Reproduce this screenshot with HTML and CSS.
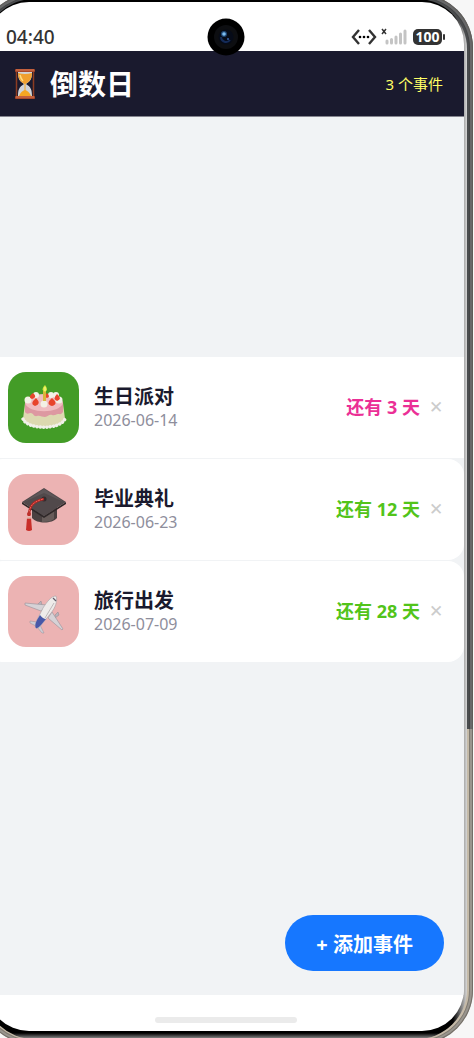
FILE: index.html
```html
<!DOCTYPE html>
<html lang="zh-CN">
<head>
    <meta charset="UTF-8">
    <meta name="viewport" content="width=device-width, initial-scale=1">
    <title>倒数日</title>
    <link rel="stylesheet" href="styles.css">
</head>
<body>
<div class="phone">
    <div class="bezel">
        <div class="screen">
            <!-- 状态栏 -->
            <div class="status">
                <span class="time">04:40</span>
                <svg class="net" viewBox="0 0 26 16" aria-hidden="true">
                    <path d="M8 1 2 8l6 7M18 1l6 7-6 7" fill="none" stroke="#333" stroke-width="2.400"/>
                    <circle cx="9" cy="8" r="1.300"/><circle cx="13" cy="8" r="1.300"/><circle cx="17" cy="8" r="1.300"/>
                </svg>
                <svg class="signal" viewBox="0 0 26 17" aria-hidden="true">
                    <path d="m1 1 4 5M5 1 1 6" stroke="#333" stroke-width="1.500"/>
                    <path d="M6 15v-2M10.500 15v-3.500M15 15v-6M19.500 15V6M24 15V3" stroke="#c4c4c4" stroke-width="3" stroke-linecap="round"/>
                </svg>
                <span class="battery">100</span>
            </div>
            <div class="camera">
                <svg viewBox="0 0 38 38" aria-hidden="true">
                    <circle cx="19" cy="19" r="18.500" fill="#000"/>
                    <circle cx="19" cy="19" r="12" fill="#0d0e11"/>
                    <circle cx="19" cy="19" r="7.500" fill="#060b18"/>
                    <path d="M14 19a5 5 0 0 0 9 3" fill="none" stroke="#142b58" stroke-width="2"/>
                    <circle cx="17" cy="16" r="3" fill="#1d4473"/>
                    <circle cx="17" cy="16" r="1.800" fill="#7dbdf0"/>
                    <circle cx="21" cy="21" r="1" fill="#3a62a8"/>
                </svg>
            </div>

            <!-- 标题 -->
            <header class="header">
                <svg class="hourglass" viewBox="0 0 22 32" aria-hidden="true">
                    <path d="M4 4c0 6 1 9 6 12-5 3-6 6-6 12h14c0-6-1-9-6-12 5-3 6-6 6-12z" fill="#cfd3d9"/>
                    <path d="M4 5c0 5 2 9 7 11 5-2 7-6 7-11q-7 2-14 0z" fill="#f0a030"/>
                    <path d="M5 28q2-5 6-6 4 1 6 6z" fill="#f5a623"/>
                    <path d="M11 15v8" stroke="#f5a623"/>
                    <path d="M6 7q1 4 3 6" fill="none" stroke="#ffdc80" stroke-width="1.500"/>
                    <path d="M2.500 3v26M19.500 3v26" stroke="#8c3c22" stroke-width="1.500"/>
                    <rect x="1" y="1" width="20" height="3" rx="1" fill="#a9492b"/>
                    <rect x="1" y="28" width="20" height="3" rx="1" fill="#a9492b"/>
                    <path d="M2 2h18M2 29h18" stroke="#dc7950"/>
                </svg>
                <h1>倒数日</h1>
                <span class="count">3 个事件</span>
            </header>

            <main class="main">
                <ul class="list">
                    <li>
                        <div class="icon green">
                            <svg viewBox="0 0 48 48" aria-hidden="true">
                                <path d="M5 20 3 36c3 6 12 8 21 8s18-2 21-8l-2-16z" fill="#dcd9b0"/>
                                <path d="M3 36c5 11 37 11 42 0" fill="none" stroke="#f1f0e9" stroke-width="3.500" stroke-linecap="round" stroke-dasharray="0.100 3.200"/>
                                <ellipse cx="24" cy="20" rx="19" ry="9" fill="#f0bcc0"/>
                                <path d="M5 20v9c2 3 4 1 6 1s3 4 6 3 5 1 8 1 4-3 7-2 4-1 6-1 3 1 5-2v-9c-3 11-35 11-38 0z" fill="#dd98a1"/>
                                <g fill="#f3f1e6"><circle cx="8" cy="17" r="3.500"/><circle cx="16" cy="12" r="3"/><circle cx="31" cy="12" r="3"/><circle cx="39" cy="17" r="3.500"/><circle cx="24" cy="21" r="3.500"/><circle cx="36" cy="12" r="3"/></g>
                                <g fill="#e8442b"><path d="M13 10q-6 4-1 6 6-2 1-6zM16 15q-7 6-1 8 7-2 1-8zM32 15q-7 6 0 8 7-2 0-8zM37 11q-5 5 0 7 6-2 0-7zM27 10q-4 4 0 5 4-1 0-5z"/></g>
                                <path d="M24.500 8v10" stroke="#d9b63c" stroke-width="3"/>
                                <path d="M25 2q-5 5 0 7 4-2 0-7z" fill="#d8e83b"/>
                                <path d="M25 4v4" stroke="#fff3a0"/>
                            </svg>
                        </div>
                        <div class="info">
                            <h2>生日派对</h2>
                            <time datetime="2026-06-14">2026-06-14</time>
                        </div>
                        <span class="days soon">还有 3 天</span>
                        <button class="del" type="button" aria-label="删除 生日派对">✕</button>
                    </li>
                    <li>
                        <div class="icon">
                            <svg viewBox="0 0 48 48" aria-hidden="true">
                                <path d="M12 22v11c5 6 20 6 25 0V22z" fill="#4a4141"/>
                                <path d="M22 28v9q9 0 12-3V24z" fill="#675c5a"/>
                                <path d="m2 17 22 14 22-14v2L24 33 2 19z" fill="#2f2829"/>
                                <path d="M24 3 2 17l22 14 22-14z" fill="#51494b"/>
                                <path d="M24 4 4 17l20-9 20 9z" fill="#5e5658"/>
                                <circle cx="24" cy="14" r="2.500" fill="#342c2e"/>
                                <path d="M24 14C14 16 9 20 9 31" fill="none" stroke="#ae2724" stroke-width="2.500"/>
                                <path d="M23 14C13 17 9 21 9 30" fill="none" stroke="#ee6257" stroke-dasharray="2 1"/>
                                <circle cx="9" cy="29" r="2" fill="#bd302b"/>
                                <path d="M7 33h4l1 12q-3 2-6 0z" fill="#c92e29"/>
                                <path d="M7 33h4" stroke="#d8b0a0" stroke-width="1.500"/>
                            </svg>
                        </div>
                        <div class="info">
                            <h2>毕业典礼</h2>
                            <time datetime="2026-06-23">2026-06-23</time>
                        </div>
                        <span class="days">还有 12 天</span>
                        <button class="del" type="button" aria-label="删除 毕业典礼">✕</button>
                    </li>
                    <li>
                        <div class="icon">
                            <svg viewBox="0 0 48 48" aria-hidden="true">
                                <path d="m17 18 4-4 1 4-3 3zM35 28l3-3 1 3-4 3z" fill="#b9b4bb" stroke="#8d8790" stroke-width=".5"/>
                                <path d="M27 18 5 16v2l16 6zM32 25l11 17-1 1-14-12z" fill="#d6d2d6" stroke="#979099" stroke-width=".6"/>
                                <path d="m17 35-7-1v2l6 3zM20 38l4 8h-2l-5-6z" fill="#cfcdd5" stroke="#979099" stroke-width=".5"/>
                                <path d="M36 9c-5 0-9 6-13 12l-6 12c-2 4-2 7-1 8s4-1 6-4l9-11c4-5 7-12 5-17z" fill="#eeebea" stroke="#a49fa5" stroke-width=".6"/>
                                <path d="M20 28q3 4 6 4l-5 6q-4 4-5 3c-1-1-1-4 1-8z" fill="#4858a8"/>
                                <path d="m33 11 3 3" stroke="#625c6a" stroke-width="1.300"/>
                                <path d="m34 16-9 15" stroke="#a7a2a6" stroke-width=".7"/>
                            </svg>
                        </div>
                        <div class="info">
                            <h2>旅行出发</h2>
                            <time datetime="2026-07-09">2026-07-09</time>
                        </div>
                        <span class="days">还有 28 天</span>
                        <button class="del" type="button" aria-label="删除 旅行出发">✕</button>
                    </li>
                </ul>
                <button class="add" type="button">+ 添加事件</button>
            </main>

            <div class="home"><span></span></div>
        </div>
    </div>
</div>
</body>
</html>
```
FILE: styles.css
```css
*{margin:0;padding:0;box-sizing:border-box;list-style:none;}
body{height:100vh;display:flex;overflow:hidden;background:#f7f7f7;
    font-family:"Noto Sans","Noto Sans CJK SC",sans-serif;color:#1a1a2e;}
svg{display:block;}
button{border:0;font-family:inherit;cursor:pointer;}

/* 手机外壳 */
.phone{flex:1;display:flex;margin:-6px 1px -6px -21px;padding:5px 6px 5px 5px;border-radius:54px;
    background:linear-gradient(#4a4c4e 70%,#c5baa8 70%);
    box-shadow:inset 0 0 0 1px rgba(90,85,78,.6),inset 0 0 0 3px rgba(255,255,255,.2),inset 0 0 0 4px rgba(60,60,60,.5);}
.bezel{flex:1;display:flex;padding:3px 3px 8px;border-radius:50px;
    background:linear-gradient(to top,#999,rgba(0,0,0,0) 6px),
    linear-gradient(to right,#000 calc(100% - 14px),#a8a8a8 calc(100% - 3px),#d8d8d8);}
.screen{flex:1;display:flex;flex-direction:column;position:relative;overflow:hidden;
    padding-left:13px;border-radius:42px;background:#fff;}

.status{height:49px;display:flex;align-items:flex-end;padding:0 22px 3px 6px;color:#333;}
.time{flex:1;font-size:19px;line-height:22px;font-weight:500;}
.net{width:26px;height:16px;margin:0 4px 3px 0;}
.signal{width:26px;height:17px;margin:0 6px 3px 0;}
.battery{position:relative;width:29px;height:16px;margin-bottom:3px;border-radius:5px;
    background:#333;color:#fff;font-size:14px;line-height:16px;font-weight:700;text-align:center;}
.battery::after{content:"";position:absolute;right:-3px;top:5px;width:2px;height:6px;background:#333;border-radius:1px;}
.camera{position:absolute;left:50%;top:16px;width:38px;margin-left:-19px;}

.header{height:66px;display:flex;align-items:center;margin-left:-13px;padding:0 21px 0 27px;
    background:#1a1a2e;border-bottom:1px solid #85858f;color:#fff;}
.hourglass{width:22px;height:32px;margin-right:14px;}
.header h1{flex:1;font-size:28px;line-height:36px;}
.count{font-size:15px;color:#ffff66;}

.main{flex:1;display:flex;flex-direction:column;margin-left:-13px;background:#f1f3f5;}
.list{flex:1;display:flex;flex-direction:column;justify-content:center;gap:1px;margin-bottom:14px;}
.list li{height:101px;display:flex;align-items:center;padding:0 21px;background:#fff;border-radius:16px;}
.list li:first-child{border-radius:0;}
.icon{width:71px;height:71px;display:flex;align-items:center;justify-content:center;
    margin-right:15px;border-radius:18px;background:#ecb3b3;}
.icon svg{width:48px;height:48px;}
.green{background:#439c27;}
.info{flex:1;}
.info h2{font-size:20px;line-height:26px;}
.info time{display:block;font-size:16px;line-height:20px;color:#8e8e9c;}
.days{font-size:18px;line-height:24px;font-weight:700;color:#52c41a;}
.soon{color:#eb2f96;}
.del{width:14px;margin-left:9px;background:none;color:#ccc;font-size:17px;line-height:20px;}
.add{align-self:flex-end;height:56px;margin:0 20px 24px 0;padding:0 31px;border-radius:28px;
    background:#1677ff;color:#fff;font-size:20px;font-weight:700;}

.home{height:36px;display:flex;justify-content:center;align-items:center;margin-left:-13px;padding-top:14px;}
.home span{width:142px;height:6px;border-radius:3px;background:#ebebeb;}
```
